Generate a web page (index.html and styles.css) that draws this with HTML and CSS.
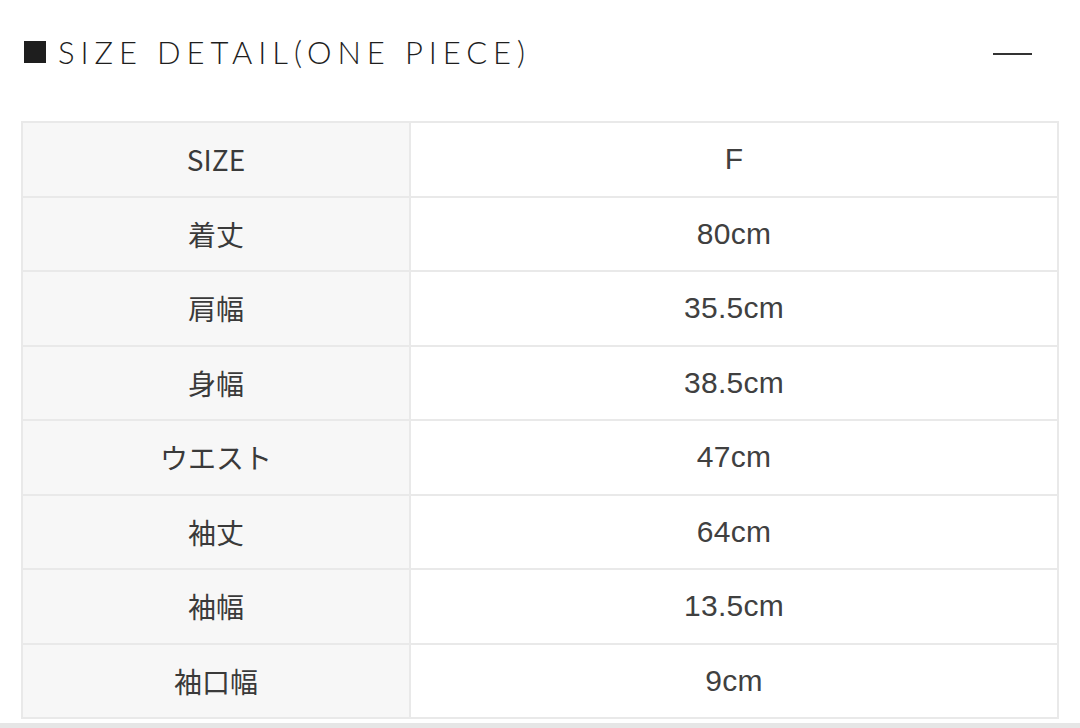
FILE: index.html
```html
<!DOCTYPE html>
<html lang="ja">
<head>
<meta charset="utf-8">
<link rel="stylesheet" href="styles.css">
</head>
<body>
<div class="page">
  <div class="header">
    <h2 class="title"><span class="sq"></span>SIZE DETAIL(ONE PIECE)</h2>
    <span class="minus"></span>
  </div>
  <table class="size-table">
    <tr><th>SIZE</th><td>F</td></tr>
    <tr><th>着丈</th><td>80cm</td></tr>
    <tr><th>肩幅</th><td>35.5cm</td></tr>
    <tr><th>身幅</th><td>38.5cm</td></tr>
    <tr><th>ウエスト</th><td>47cm</td></tr>
    <tr><th>袖丈</th><td>64cm</td></tr>
    <tr><th>袖幅</th><td>13.5cm</td></tr>
    <tr><th>袖口幅</th><td>9cm</td></tr>
  </table>
  <div class="bottom-rule"></div>
</div>
</body>
</html>
```

FILE: styles.css
```css
html, body {
  margin: 0;
  padding: 0;
  background: #fff;
}
.page {
  width: 1080px;
  height: 728px;
  position: relative;
  overflow: hidden;
  font-family: Lato, "Noto Sans CJK JP", sans-serif;
  color: #333;
}
.header {
  display: flex;
  align-items: center;
  justify-content: space-between;
  padding: 31px 48px 0 24px;
  height: 42px;
}
.title {
  margin: 0;
  display: flex;
  align-items: center;
  font-family: Lato, sans-serif;
  font-weight: 300;
  font-size: 31px;
  letter-spacing: 5.9px;
  color: #1e1e1e;
}
.sq {
  display: inline-block;
  width: 22px;
  height: 22px;
  background: #1e1e1e;
  margin-right: 12px;
}
.minus {
  display: block;
  width: 39px;
  height: 2px;
  background: #333;
  margin-top: 4px;
}
.size-table {
  margin: 48px 0 0 21px;
  width: 1038px;
  border-collapse: collapse;
  table-layout: fixed;
}
.size-table th,
.size-table td {
  border: 2px solid #e9e9e9;
  height: 72.5px;
  padding: 0;
  text-align: center;
  font-weight: 400;
  color: #3a3a3a;
  line-height: 1;
}
.size-table th {
  width: 386px;
  background: #f7f7f7;
  font-family: "Noto Sans CJK JP", sans-serif;
  font-size: 28px;
  font-weight: 400;
}
.size-table td {
  background: #fff;
  font-family: "Liberation Sans", Arial, sans-serif;
  font-size: 30px;
  letter-spacing: 0.3px;
  color: #404040;
}
.bottom-rule {
  position: absolute;
  left: 0;
  right: 0;
  bottom: 0;
  height: 5px;
  background: #e6e6e6;
}
```
